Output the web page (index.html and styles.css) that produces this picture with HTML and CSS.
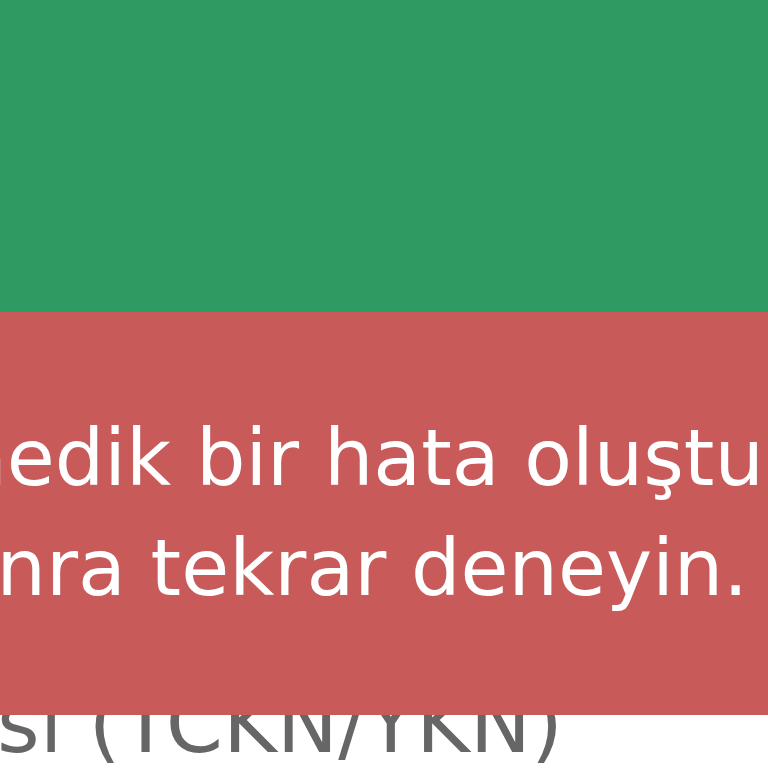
FILE: index.html
```html
<!DOCTYPE html>
<html lang="tr">
<head>
<meta charset="utf-8">
<link rel="stylesheet" href="styles.css">
</head>
<body>
<div class="page">
  <header class="header"></header>
  <main class="content">
    <label class="field-label">Kimlik Numarası (TCKN/YKN)</label>
  </main>
  <div class="toast" role="alert">
    <div class="toast-line line-1">Beklenmedik bir hata oluştu.</div>
    <div class="toast-line line-2">Lütfen daha sonra tekrar deneyin.</div>
  </div>
</div>
</body>
</html>
```
FILE: styles.css
```css
html, body {
  margin: 0;
  padding: 0;
  background: #ffffff;
  overflow: hidden;
}
.page {
  position: relative;
  width: 768px;
  height: 768px;
  overflow: hidden;
  font-family: "DejaVu Sans", "Open Sans", sans-serif;
}
.header {
  height: 312px;
  background: #2e9c62;
}
.content {
  padding-top: 367px;
}
.field-label {
  display: block;
  white-space: nowrap;
  font-size: 82px;
  line-height: 90px;
  color: #666666;
  margin-left: -606px;
}
.toast {
  position: absolute;
  top: 312px;
  left: 0;
  right: 0;
  height: 403px;
  background: #c85a5a;
  color: #ffffff;
  padding-top: 91px;
  box-sizing: border-box;
}
.toast-line {
  white-space: nowrap;
  font-size: 78px;
  line-height: 110px;
}
.line-1 {
  margin-left: -335px;
}
.line-2 {
  margin-left: -583px;
}
```
